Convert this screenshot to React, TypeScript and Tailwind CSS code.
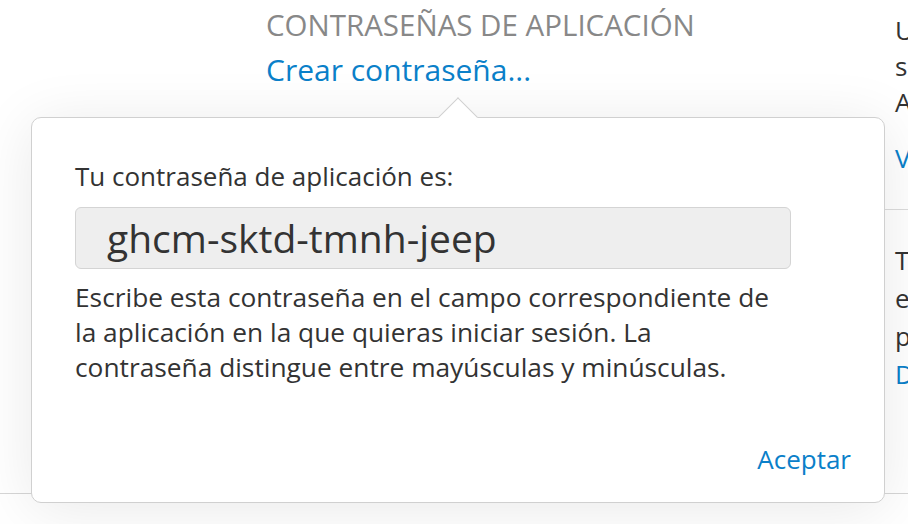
import React from "react";

const font = { fontFamily: '"Open Sans", "Noto Sans", sans-serif' };

export default function App() {
  return (
    <div
      className="relative w-[908px] h-[524px] overflow-hidden bg-white text-[#333]"
      style={font}
    >
      {/* underlying page */}
      <div className="flex h-[494px] border-b border-[#d6d6d6]">
        <div className="w-[266px] shrink-0" />
        <div className="w-[629px] shrink-0 pt-[5px]">
          <div className="text-[29.5px] leading-[40px] text-[#888] whitespace-nowrap">
            CONTRASEÑAS DE APLICACIÓN
          </div>
          <div className="mt-[5px] text-[30px] leading-[40px] text-[#0a80c9] whitespace-nowrap">
            Crear contraseña...
          </div>
        </div>
        <div className="flex flex-col text-[26px] whitespace-nowrap">
          <div className="pt-[12px] pb-[33px] border-b border-[#dcdcdc] -ml-[20px] pl-[20px]">
            <div className="leading-[36px]">Usa contraseñas</div>
            <div className="leading-[36px]">seguras para</div>
            <div className="leading-[36px]">Apps</div>
            <div className="leading-[36px] mt-[20px] text-[#0a80c9]">Ver historial</div>
          </div>
          <div className="pt-[31px] -ml-[20px] pl-[20px]">
            <div className="leading-[38px]">También puedes</div>
            <div className="leading-[38px]">en cualquier</div>
            <div className="leading-[38px]">para revocar</div>
            <div className="leading-[38px] text-[#0a80c9]">Desactivar</div>
          </div>
        </div>
      </div>

      {/* popover */}
      <div className="absolute left-[31px] top-[117px] w-[854px] h-[386px] rounded-[10px] border-[1.5px] border-[#d0d0d0] bg-white shadow-[0_6px_60px_rgba(0,0,0,0.09)] flex flex-col px-[43px] pt-[41px] pb-[26px]">
        <div className="absolute left-[412px] -top-[15px] w-[28px] h-[28px] rotate-45 bg-white border-l-[1.5px] border-t-[1.5px] border-[#d0d0d0]" />
        <div className="text-[26px] leading-[35px] text-[#333] whitespace-nowrap">
          Tu contraseña de aplicación es:
        </div>
        <div className="mt-[13px] w-[716px] h-[62px] rounded-[6px] border-[1.5px] border-[#d4d4d4] bg-[#eeeeee] flex items-center pl-[31px] text-[39px] text-[#333] whitespace-nowrap">
          ghcm-sktd-tmnh-jeep
        </div>
        <div className="mt-[11px] w-[715px] text-[26.3px] leading-[35px] text-[#333]">
          Escribe esta contraseña en el campo correspondiente de la aplicación en
          la que quieras iniciar sesión. La contraseña distingue entre mayúsculas y
          minúsculas.
        </div>
        <div className="mt-auto flex justify-end">
          <span className="text-[26px] leading-[34px] text-[#0a80c9] -mr-[10px]">Aceptar</span>
        </div>
      </div>
    </div>
  );
}
